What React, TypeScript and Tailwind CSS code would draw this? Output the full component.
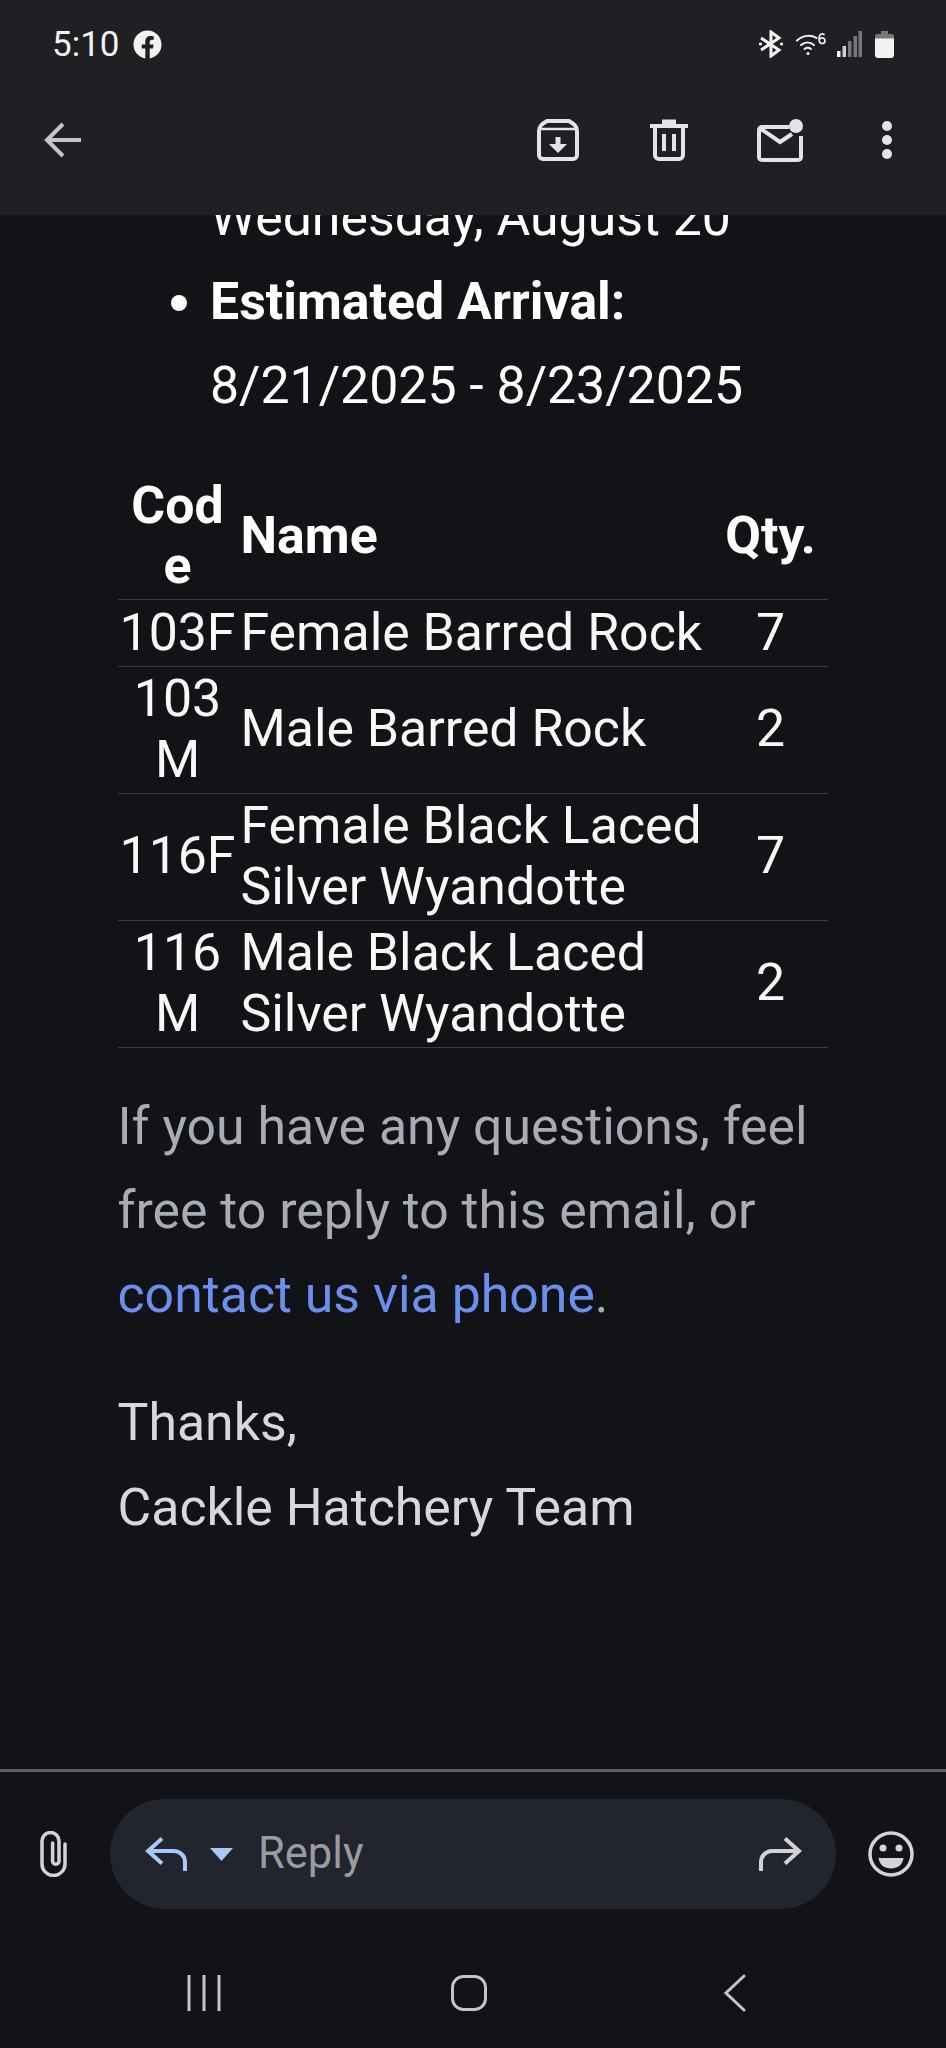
import { FaFacebook } from "react-icons/fa";

const rows = [
  { code: "103F", name: "Female Barred Rock", qty: 7 },
  { code: "103M", name: "Male Barred Rock", qty: 2 },
  { code: "116F", name: "Female Black Laced Silver Wyandotte", qty: 7 },
  { code: "116M", name: "Male Black Laced Silver Wyandotte", qty: 2 },
];

function StatusIcons() {
  return (
    <div className="flex items-center text-[#f2f2f3]">
      {/* bluetooth */}
      <svg width="24" height="28" viewBox="0 0 24 28" fill="none" stroke="currentColor" strokeWidth="3">
        <path d="M2 8l18 12-8 6V2l8 6L2 20" />
        <circle cx="1.5" cy="14" r="1.6" fill="currentColor" stroke="none" />
        <circle cx="22.5" cy="14" r="1.6" fill="currentColor" stroke="none" />
      </svg>
      {/* wifi 6 */}
      <svg className="ml-[13px]" width="31" height="24" viewBox="0 0 31 24" fill="none" stroke="currentColor" strokeWidth="2" strokeLinecap="round">
        <path d="M1 8.5C7 3 15 2.5 20.5 6" />
        <path d="M5 13c4-3.5 9-3.5 13 0" />
        <path d="M8.5 17c2-1.5 4.500-1.500 6.500 0" />
        <circle cx="12" cy="21.500" r="1.500" fill="currentColor" stroke="none" />
        <path d="M28 2.500c-2.500-1.500-5 0-5 4s1 5 3 5 3-1 3-2.800-1-2.800-3-2.800-2.500 1-3 2" strokeWidth="1.700" />
      </svg>
      {/* signal bars, only the first two lit */}
      <svg className="ml-[10px]" width="25" height="26" viewBox="0 0 25 26">
        <rect x="0" y="20" width="3.500" height="6" fill="#f2f2f3" />
        <rect x="5.500" y="15" width="3.500" height="11" fill="#d0d0d2" />
        <rect x="11" y="10" width="3.500" height="16" fill="#77787b" />
        <rect x="16.500" y="5" width="3.500" height="21" fill="#77787b" />
        <rect x="21.500" y="0" width="3.500" height="26" fill="#77787b" />
      </svg>
      {/* battery */}
      <svg className="ml-[13px]" width="19" height="27" viewBox="0 0 19 27">
        <path d="M6 0h7v3h4a2 2 0 0 1 2 2v4H0V5a2 2 0 0 1 2-2h4z" fill="#77787b" />
        <path d="M0 7.500h19V24a3 3 0 0 1-3 3H3a3 3 0 0 1-3-3z" fill="#f2f2f3" />
      </svg>
    </div>
  );
}

function Toolbar() {
  return (
    <div className="flex h-[104px] items-center pl-[44px] pr-[54px] text-[#e3e3e8]">
      <svg width="38" height="36" viewBox="0 0 38 36" fill="none" stroke="#c4c5cc" strokeWidth="4">
        <path d="M37 18H4M19 2L3 18l16 16" />
      </svg>
      {/* archive */}
      <svg className="ml-auto" width="42" height="42" viewBox="0 0 42 42" fill="none" stroke="currentColor">
        <path d="M10 2h22c5 3 8 5 8 10v24a4 4 0 0 1-4 4H6a4 4 0 0 1-4-4V12c0-5 3-7 8-10z" strokeWidth="4" strokeLinejoin="round" />
        <path d="M3 10h36" strokeWidth="2.500" />
        <path d="M21 18v10" strokeWidth="5" />
        <path d="M12 25h18l-9 9z" fill="currentColor" stroke="none" />
      </svg>
      {/* trash */}
      <svg className="ml-[71px]" width="38" height="42" viewBox="0 0 38 42" fill="none" stroke="currentColor" strokeWidth="4">
        <path d="M0 7h38" />
        <path d="M12 3.500h14" strokeWidth="6" />
        <path d="M5 7v29a4 4 0 0 0 4 4h20a4 4 0 0 0 4-4V7" />
        <path d="M14 15v17M24 15v17" />
      </svg>
      {/* mark unread */}
      <svg className="ml-[69px]" width="47" height="43" viewBox="0 0 47 43" fill="none" stroke="currentColor" strokeWidth="4">
        <path d="M32 8H5a3 3 0 0 0-3 3v27a3 3 0 0 0 3 3h36a3 3 0 0 0 3-3V17" strokeLinejoin="round" />
        <path d="M4 10l19 13 12-8" />
        <circle cx="39" cy="7" r="7" fill="currentColor" stroke="none" />
      </svg>
      <div className="ml-[78px] flex w-[10px] flex-col gap-[4px]">
        <span className="size-[10px] rounded-full bg-[#e3e3e8]" />
        <span className="size-[10px] rounded-full bg-[#e3e3e8]" />
        <span className="size-[10px] rounded-full bg-[#e3e3e8]" />
      </div>
    </div>
  );
}

function ReplyBar() {
  return (
    <div className="flex items-center pl-[40px] pt-[27px]">
      {/* paperclip */}
      <svg width="27" height="46" viewBox="0 0 27 46" fill="none" stroke="#d2d3d6" strokeWidth="3.500" strokeLinecap="round">
        <path d="M25 13v20a11.500 11.500 0 0 1-23 0V10a8.500 8.500 0 0 1 17 0v20a3.200 3.200 0 0 1-6.400 0V12" />
      </svg>
      <div className="ml-[43px] flex h-[110px] w-[726px] items-center rounded-full bg-[#22252d] pl-[35px] pr-[34px]">
        <svg width="42" height="34" viewBox="0 0 42 34" fill="none" stroke="#a8c7fa" strokeWidth="4">
          <path d="M17 1.500L3 14l14 12.500" />
          <path d="M3 14h26a11 11 0 0 1 11 11v9" />
        </svg>
        <svg className="ml-[23px]" width="23" height="13" viewBox="0 0 23 13">
          <path d="M0 0h23L11.500 13z" fill="#a8c7fa" />
        </svg>
        <span className="ml-[25px] font-['Roboto',sans-serif] text-[43.500px] leading-none text-[#9a9ca1]">Reply</span>
        <svg className="ml-auto" width="43" height="34" viewBox="0 0 43 34" fill="none" stroke="#d2d3d6" strokeWidth="4">
          <path d="M26 1.500L40 14 26 26.500" />
          <path d="M40 14H13A11 11 0 0 0 2 25v9" />
        </svg>
      </div>
      {/* emoji */}
      <svg className="ml-[32px]" width="46" height="46" viewBox="0 0 46 46">
        <circle cx="23" cy="23" r="21" fill="none" stroke="#d2d3d6" strokeWidth="3.500" />
        <circle cx="15" cy="17" r="3.500" fill="#d2d3d6" />
        <circle cx="31" cy="17" r="3.500" fill="#d2d3d6" />
        <path d="M10.500 27h25c-1 7-6 10.500-12.500 10.500S11.500 34 10.500 27z" fill="#d2d3d6" />
      </svg>
    </div>
  );
}

function NavBar() {
  return (
    <div className="mt-[65px] flex items-center pl-[187px]">
      <svg width="34" height="36" viewBox="0 0 34 36" stroke="#c4c5c8" strokeWidth="3">
        <path d="M2 0v36M17 0v36M32 0v36" />
      </svg>
      <svg className="ml-[230px]" width="36" height="36" viewBox="0 0 36 36" fill="none" stroke="#c4c5c8" strokeWidth="3">
        <rect x="1.500" y="1.500" width="33" height="33" rx="11" />
      </svg>
      <svg className="ml-[237px]" width="22" height="38" viewBox="0 0 22 38" fill="none" stroke="#c4c5c8" strokeWidth="3" strokeLinecap="round">
        <path d="M20 2L2 19l18 17" />
      </svg>
    </div>
  );
}

export default function App() {
  return (
    <div className="flex h-[2048px] w-[946px] flex-col overflow-hidden bg-[#111317] font-['Roboto',sans-serif] text-[51.800px]">
      <header className="z-10 h-[215px] shrink-0 bg-[#1f1f24]">
        <div className="flex h-[88px] items-center justify-between pl-[52px] pr-[52px]">
          <div className="flex items-center gap-[13px] text-[#f2f2f3]">
            <span className="text-[35px] leading-none">5:10</span>
            <FaFacebook size={29} />
          </div>
          <StatusIcons />
        </div>
        <Toolbar />
      </header>

      {/* message body, scrolled part way down */}
      <main className="min-h-0 flex-1 overflow-hidden">
        <div className="-mt-[39px] pl-[117.500px] pr-[118px] leading-[84px] text-white">
          <ul className="list-disc pl-[92.500px]">
            <li className="list-none">Wednesday, August 20</li>
            <li>
              <b className="font-bold">Estimated Arrival:</b>
              <br />
              8/21/2025 - 8/23/2025
            </li>
          </ul>

          <table className="mt-[45px] w-[710px] table-fixed border-collapse leading-[60.500px] text-[#f8f8f8]">
            <colgroup>
              <col className="w-[120px]" />
              <col className="w-[476px]" />
              <col className="w-[114px]" />
            </colgroup>
            <thead>
              <tr className="border-b border-[#3a3c40]">
                <th className="break-all px-[3px] py-[2.500px] text-center font-bold text-white">Code</th>
                <th className="px-[3px] py-[2.500px] text-left font-bold text-white">Name</th>
                <th className="py-[2.500px] text-center font-bold text-white">Qty.</th>
              </tr>
            </thead>
            <tbody>
              {rows.map((r) => (
                <tr key={r.code} className="border-b border-[#3a3c40]">
                  <td className="break-all py-[2.500px] text-center">{r.code}</td>
                  <td className="px-[3px] py-[2.500px]">{r.name}</td>
                  <td className="py-[2.500px] text-center">{r.qty}</td>
                </tr>
              ))}
            </tbody>
          </table>

          <p className="mt-[37px] text-[#a9abb5]">
            If you have any questions, feel free to reply to this email, or{" "}
            <a className="text-[#6c8fee]">contact us via phone</a>.
          </p>

          <p className="mt-[43px] leading-[85px] text-[#d8d8db]">
            Thanks,
            <br />
            Cackle Hatchery Team
          </p>
        </div>
      </main>

      <footer className="h-[279px] shrink-0 border-t-[3px] border-[#5d5e62]">
        <ReplyBar />
        <NavBar />
      </footer>
    </div>
  );
}
